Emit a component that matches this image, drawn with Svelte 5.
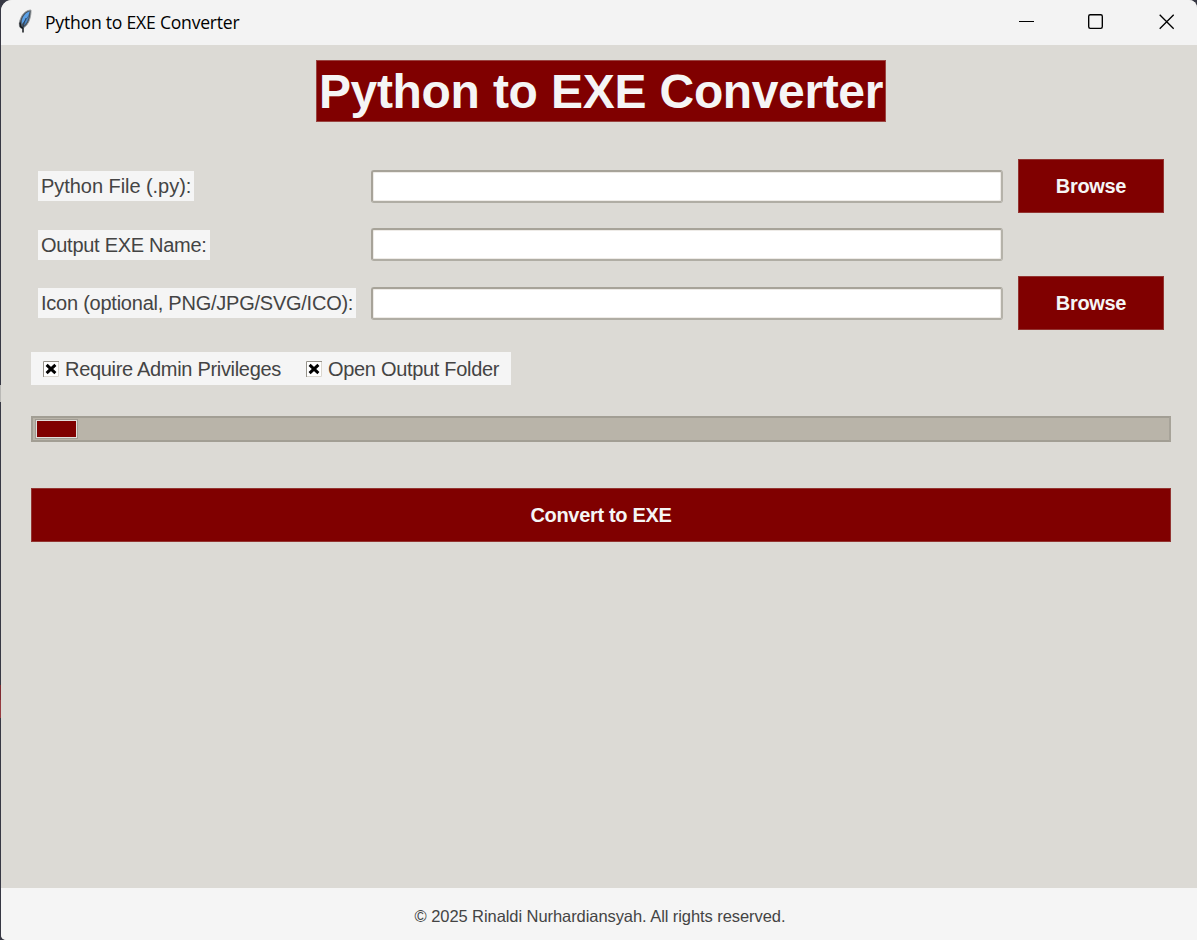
<script>
  let pythonFile = $state('');
  let outputName = $state('');
  let iconFile = $state('');
  const progress = 3.6;
</script>

<div class="desktop">
  <div class="window">
    <header>
      <svg class="feather" width="15" height="26" viewBox="0 0 15 26">
        <path d="M14 2C10 2 5.6 5.2 3.6 10.5C2 14 1.9 17.3 3 19.5L5.3 20.8C8.8 18.7 11.7 15.4 12.8 11C13.7 7.7 14.2 4.5 14 2Z" fill="#48525c" stroke="#999c9e" stroke-width=".9" />
        <path d="M12.8 3.2C9.2 4.2 6 7.7 4.9 12L4.6 16.5L8 12.3L11.4 7.8Z" fill="#5aa0e6" />
        <path d="M12 7.5L7.8 13.5L6.2 18C9 16.2 11.5 12.5 12 7.5Z" fill="#4a86c6" />
        <path d="M9 10C7.7 13 6.5 16.4 5.9 20" fill="none" stroke="#1c3048" stroke-width=".7" />
        <path d="M3 14.5L3.5 18.5L6 20.3V24.5" fill="none" stroke="#15191d" stroke-width="1.5" />
      </svg>
      <span class="caption">Python to EXE Converter</span>
      <div class="controls">
        <svg width="16" height="16" viewBox="0 0 16 16"><path class="thin" d="M0 7.5H15" /></svg>
        <svg width="16" height="16" viewBox="0 0 16 16"><rect x=".7" y=".7" width="13.6" height="13.6" rx="1.5" /></svg>
        <svg width="16" height="16" viewBox="0 0 16 16"><path d="M.7.7L14.7 14.7M14.7.7L.7 14.7" /></svg>
      </div>
    </header>

    <main>
      <h1><span>Python to EXE Converter</span></h1>

      <div class="form">
        <label for="py" class="t1">Python File (.py):</label>
        <input id="py" bind:value={pythonFile} />
        <button>Browse</button>
        <label for="out">Output EXE Name:</label>
        <input id="out" bind:value={outputName} />
        <i></i>
        <label for="ico" class="t3">Icon (optional, PNG/JPG/SVG/ICO):</label>
        <input id="ico" bind:value={iconFile} />
        <button>Browse</button>
      </div>

      <div class="options">
        <div class="option first">
          <svg width="16" height="16" viewBox="0 0 16 16"><path class="light" d="M0 15.5H15.5V0" /><path class="dark" d="M.5 16V.5H16" /><path class="tick" d="M3.6 3.9L12.4 12.1M12.4 3.9L3.6 12.1" /></svg>
          <span>Require Admin Privileges</span>
        </div>
        <div class="option">
          <svg width="16" height="16" viewBox="0 0 16 16"><path class="light" d="M0 15.5H15.5V0" /><path class="dark" d="M.5 16V.5H16" /><path class="tick" d="M3.6 3.9L12.4 12.1M12.4 3.9L3.6 12.1" /></svg>
          <span>Open Output Folder</span>
        </div>
      </div>

      <div class="progress"><div class="bar" style="width: {progress}%"></div></div>
      <button class="convert">Convert to EXE</button>
    </main>

    <footer><span>© 2025 Rinaldi Nurhardiansyah. All rights reserved.</span></footer>
  </div>
</div>

<style>
  :global(body) { margin: 0; overflow: hidden; }
  * { box-sizing: border-box; }
  .desktop {
    width: 1197px;
    height: 940px;
    padding-left: 1px;
    background: linear-gradient(#373844 0 385px, #b9b8b5 385px 402px, #373844 402px 685px, #7e2930 685px 700px, #963a40 700px 718px, #373844 718px);
    font-family: "Liberation Sans", Arial, sans-serif;
    color: #444;
  }
  .window {
    height: 940px;
    display: flex;
    flex-direction: column;
    background: #dcdad5;
    border-radius: 11px 8px 0 5px;
    overflow: hidden;
  }
  header {
    height: 45px;
    flex: none;
    display: flex;
    align-items: center;
    padding: 0 22px 2px 16px;
    background: #f3f3f3;
    color: #000;
  }
  .feather { margin-top: -2px; }
  .caption {
    margin: 0 0 0 13px;
    font: 17.6px "Open Sans", "Noto Sans", sans-serif;
    letter-spacing: -.23px;
    white-space: nowrap;
  }
  .controls { margin-left: auto; display: grid; grid-template-columns: 69px 71px 16px; }
  .controls svg { fill: none; stroke: #000; stroke-width: 1.35; }
  .controls .thin { stroke-width: 1; }
  main { flex: 1; padding: 15px 26px 0 30px; }
  h1 {
    width: 570px;
    height: 62px;
    margin: 0 auto;
    background: #800000;
    color: #f5f5f5;
    border: 1px solid #9a4441;
    font-size: 48px;
    line-height: 61px;
    letter-spacing: -.37px;
    word-spacing: .6px;
    text-align: center;
    white-space: nowrap;
  }
  .form {
    margin: 37px 8px 0 7px;
    display: grid;
    grid-template-columns: 318px 632px 146px;
    grid-template-rows: 54px 33px 54px;
    column-gap: 15px;
    row-gap: 15px;
    align-items: center;
  }
  label {
    justify-self: start;
    height: 30px;
    padding: 0 3px;
    background: #f5f5f5;
    font-size: 20px;
    line-height: 31px;
    letter-spacing: -.28px;
    white-space: nowrap;
  }
  .t1 { letter-spacing: -.05px; }
  .t3 { letter-spacing: -.24px; }
  input {
    width: 632px;
    height: 33px;
    padding: 0 6px;
    background: #fff;
    border: 2px solid #a9a59b;
    border-color: #a7a399 #b5b2a9 #b0ada4 #a7a399;
    border-radius: 3px;
    box-shadow: inset -1px -1px #eeebe7, inset 1px 1px #eeebe7;
    outline: none;
  }
  button {
    height: 54px;
    padding: 0;
    background: #800000;
    border: 1px solid #933431;
    color: #f5f5f5;
    font: bold 20px "Liberation Sans", Arial, sans-serif;
    letter-spacing: -.32px;
  }
  .options {
    width: 480px;
    height: 33px;
    margin-top: 22px;
    padding-left: 12px;
    display: flex;
    align-items: center;
    background: #f5f5f5;
    font-size: 20px;
    letter-spacing: -.31px;
    white-space: nowrap;
  }
  .option { display: flex; align-items: center; gap: 6px; }
  .option span { padding-top: 2px; }
  .first { width: 263px; }
  .option svg { fill: none; background: #fff; }
  .dark { stroke: #96938b; }
  .light { stroke: #dad7d0; }
  .tick { stroke: #000; stroke-width: 3; }
  .progress {
    height: 26px;
    margin-top: 31px;
    padding: 2px 3px;
    background: #b9b4a9;
    border: 2px solid #a29e94;
    border-right-color: #a7a399;
  }
  .bar {
    height: 18px;
    background: #800000;
    border: 1px solid #e2dedb;
    box-shadow: 0 0 0 1px #a09b92;
  }
  .convert { display: block; width: 100%; margin-top: 46px; }
  footer {
    height: 52px;
    flex: none;
    padding: 5px 0 0 2px;
    display: flex;
    align-items: center;
    justify-content: center;
    background: #f5f5f5;
    font-size: 16.5px;
    letter-spacing: -.07px;
    white-space: nowrap;
  }
</style>
